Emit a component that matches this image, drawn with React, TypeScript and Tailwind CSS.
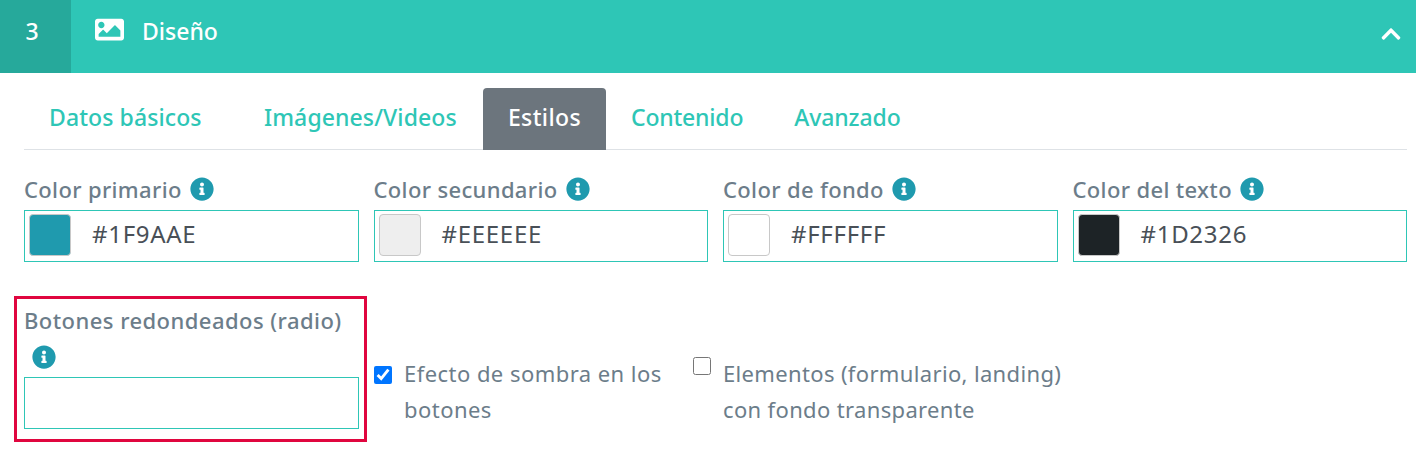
import React from "react";
import { FaImage, FaInfoCircle, FaChevronUp } from "react-icons/fa";

const font = "font-['Noto_Sans','Open_Sans',sans-serif]";

function Info({ className = "" }: { className?: string }) {
  return <FaInfoCircle className={`text-[#1f9aae] w-[24px] h-[24px] shrink-0 ${className}`} />;
}

function ColorField({ label, color, value }: { label: string; color: string; value: string }) {
  return (
    <div className="min-w-0">
      <div className="flex items-center gap-[8px] h-[36px] mb-[2px] pb-[2px] text-[22px] font-medium text-[#6c7d8a] whitespace-nowrap tracking-[0.35px]">
        <span>{label}</span>
        <Info />
      </div>
      <div className="h-[52px] border border-[#2ec6b6] flex items-start pl-[4px] pt-[3px]">
        <span className="w-[42px] h-[42px] rounded-[4px] border border-[#c8c8c8] shrink-0" style={{ backgroundColor: color }} />
        <span className="ml-[21px] mt-[2px] text-[24px] leading-[36px] text-[#495057] tracking-[0.7px]">{value}</span>
      </div>
    </div>
  );
}

export default function App() {
  return (
    <div className={`w-[1416px] h-[454px] bg-white overflow-hidden ${font}`}>
      <header className="h-[73px] bg-[#2ec6b6] flex items-center text-white">
        <div className="w-[71px] h-full bg-[#26a99b] flex items-center justify-center pb-[10px] text-[23px] font-medium pr-[7px]">3</div>
        <FaImage className="ml-[24px] w-[29px] h-[29px] mb-[14px]" />
        <span className="ml-[18px] text-[23px] font-medium pb-[11px]">Diseño</span>
        <FaChevronUp className="ml-auto mr-[14px] w-[22px] h-[22px] mb-[6px]" />
      </header>

      <div className="ml-[24px] w-[1383px] mt-[15px] h-[62px] border-b border-[#dee2e6] flex text-[23px] font-medium text-[#2ec6b6] tracking-[0.1px]">
        <div className="w-[214px] pl-[25px] pt-[12px] whitespace-nowrap">Datos básicos</div>
        <div className="w-[245px] pl-[26px] pt-[12px] whitespace-nowrap">Imágenes/Videos</div>
        <div className="w-[123px] h-[62px] bg-[#6c757d] text-white rounded-t-[4px] flex justify-center pt-[12px] tracking-[0.4px]">Estilos</div>
        <div className="pl-[25px] pt-[12px] tracking-[-0.2px]">Contenido</div>
        <div className="pl-[51px] pt-[12px] tracking-[-0.1px]">Avanzado</div>
      </div>

      <div className="ml-[24px] w-[1383px] mt-[22px] grid grid-cols-4 gap-x-[15px]">
        <ColorField label="Color primario" color="#1f9aae" value="#1F9AAE" />
        <ColorField label="Color secundario" color="#eeeeee" value="#EEEEEE" />
        <ColorField label="Color de fondo" color="#ffffff" value="#FFFFFF" />
        <ColorField label="Color del texto" color="#1d2326" value="#1D2326" />
      </div>

      <div className="ml-[14px] mt-[34px] flex items-start">
        <div className="w-[353px] h-[146px] border-[3px] border-[#e0063f] pl-[7px] pr-[5px] pt-[5px]">
          <div className="h-[36px] text-[22px] font-medium text-[#6c7d8a] whitespace-nowrap tracking-[0.45px]">Botones redondeados (radio)</div>
          <Info className="ml-[8px] mt-[5px]" />
          <div className="h-[52px] mt-[8px] border border-[#2ec6b6]" />
        </div>

        <div className="ml-[7px] mt-[59px] w-[300px] flex items-start text-[22px] leading-[36px] text-[#6c7d8a] tracking-[0.45px]">
          <input type="checkbox" defaultChecked className="w-[18px] h-[18px] mt-[11px] m-0 shrink-0 accent-[#0075ff]" />
          <span className="ml-[12px]">Efecto de sombra en los botones</span>
        </div>

        <div className="ml-[19px] mt-[59px] w-[380px] flex items-start text-[22px] leading-[36px] text-[#6c7d8a] tracking-[0.35px]">
          <input type="checkbox" className="w-[18px] h-[18px] mt-[2px] m-0 shrink-0" />
          <span className="ml-[12px]">Elementos (formulario, landing)<br />con fondo transparente</span>
        </div>
      </div>
    </div>
  );
}
